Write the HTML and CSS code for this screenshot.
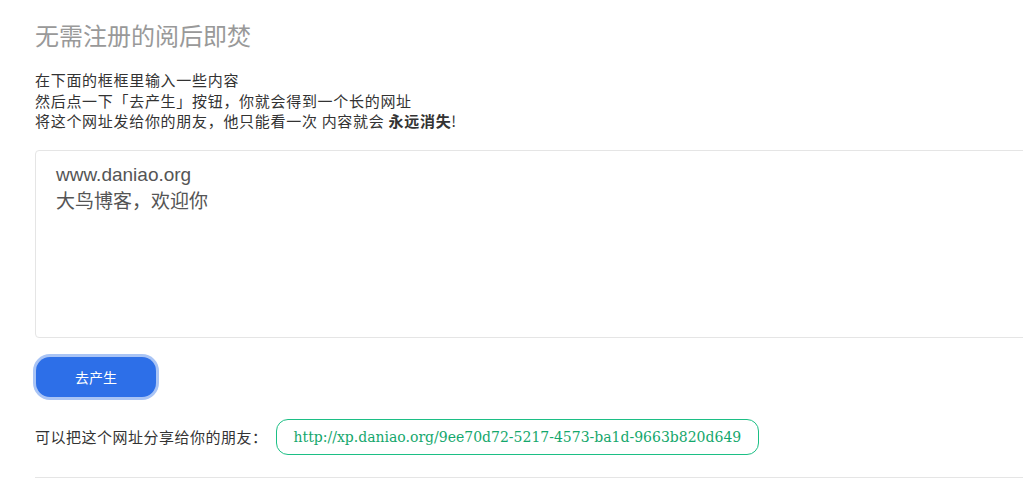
FILE: index.html
```html
<!DOCTYPE html>
<html lang="zh-cn">
<head>
<meta charset="utf-8"/>
<meta content="width=device-width, initial-scale=1.0" name="viewport"/>
<title>无需注册的阅后即焚</title>
<link rel="stylesheet" href="styles.css">
</head>
<body>
<div class="wrap">
  <h1>无需注册的阅后即焚</h1>
  <p class="intro">
    在下面的框框里输入一些内容<br/>
    然后点一下「去产生」按钮，你就会得到一个长的网址<br/>
    将这个网址发给你的朋友，他只能看一次 内容就会 <b>永远消失</b>!
  </p>
  <textarea id="content">www.daniao.org
大鸟博客，欢迎你</textarea>
  <button class="btn-primary" id="makeBtn">去产生</button>
  <div class="share">
    <span>可以把这个网址分享给你的朋友：</span>
    <a class="share-link" href="#">http://xp.daniao.org/9ee70d72-5217-4573-ba1d-9663b820d649</a>
  </div>
  <hr/>
</div>
</body>
</html>
```

FILE: styles.css
```css
body {
  margin: 0;
  font-family: "Microsoft YaHei", "Noto Sans CJK SC", "Liberation Sans", sans-serif;
  color: #333;
  background: #fff;
  overflow: hidden;
}
.wrap {
  width: 1100px;
  padding: 18px 0 0 35px;
}
h1 {
  font-size: 24px;
  font-weight: normal;
  color: #999;
  margin: 0 0 18px;
  line-height: 34px;
}
.intro {
  font-size: 15px;
  letter-spacing: 0.7px;
  line-height: 20.5px;
  margin: 0 0 18px;
}
.intro b {
  font-weight: bold;
}
textarea {
  display: block;
  width: 100%;
  height: 188px;
  box-sizing: border-box;
  padding: 10px 20px;
  font-family: "Liberation Sans", "Noto Sans CJK SC", sans-serif;
  font-size: 19px;
  line-height: 27px;
  color: #555;
  border: 1px solid #e5e5e5;
  border-radius: 4px;
  resize: none;
  outline: none;
  margin: 0 0 19px;
}
.btn-primary {
  display: block;
  margin-left: 1px;
  width: 120px;
  height: 40px;
  border: none;
  border-radius: 14px;
  background: #2d6fe8;
  color: #fff;
  font-family: inherit;
  font-size: 14px;
  box-shadow: 0 0 0 3px #a9c4f5;
  cursor: pointer;
}
.share {
  display: flex;
  align-items: center;
  margin-top: 22px;
  font-size: 15px;
  letter-spacing: 0.5px;
}
.share-link {
  display: inline-block;
  margin-left: 8px;
  padding: 0 17px;
  height: 34px;
  line-height: 34px;
  border: 1px solid #1cbf85;
  border-radius: 12px;
  color: #14a76c;
  font-family: Georgia, "DejaVu Serif", serif;
  font-size: 14px;
  letter-spacing: 0;
  text-decoration: none;
}
hr {
  border: none;
  border-top: 1px solid #e5e5e5;
  margin: 22px 0 0;
}
```
